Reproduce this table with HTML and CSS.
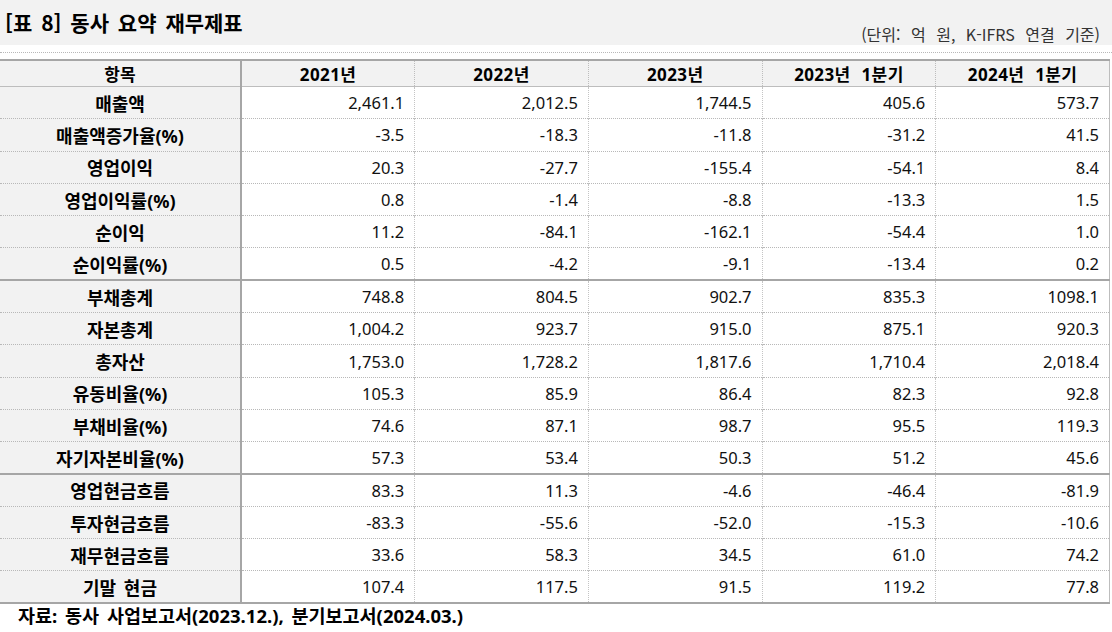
FILE: index.html
```html
<!DOCTYPE html>
<html lang="ko">
<head>
<meta charset="utf-8">
<title>동사 요약 재무제표</title>
<link rel="stylesheet" href="styles.css">
</head>
<body>
<div class="page">
  <div class="title-bar">
    <h1 class="title">[표 8] 동사 요약 재무제표</h1>
    <span class="unit">(단위: 억 원, K-IFRS 연결 기준)</span>
  </div>
  <div class="rule"></div>
  <table class="fin">
    <colgroup>
      <col class="c-label">
      <col><col><col><col><col>
    </colgroup>
    <thead>
      <tr>
        <th class="lbl">항목</th>
        <th>2021년</th>
        <th>2022년</th>
        <th>2023년</th>
        <th>2023년 1분기</th>
        <th>2024년 1분기</th>
      </tr>
    </thead>
    <tbody>
      <tr><th class="lbl">매출액</th><td>2,461.1</td><td>2,012.5</td><td>1,744.5</td><td>405.6</td><td>573.7</td></tr>
      <tr><th class="lbl">매출액증가율(%)</th><td>-3.5</td><td>-18.3</td><td>-11.8</td><td>-31.2</td><td>41.5</td></tr>
      <tr><th class="lbl">영업이익</th><td>20.3</td><td>-27.7</td><td>-155.4</td><td>-54.1</td><td>8.4</td></tr>
      <tr><th class="lbl">영업이익률(%)</th><td>0.8</td><td>-1.4</td><td>-8.8</td><td>-13.3</td><td>1.5</td></tr>
      <tr><th class="lbl">순이익</th><td>11.2</td><td>-84.1</td><td>-162.1</td><td>-54.4</td><td>1.0</td></tr>
      <tr class="group-end"><th class="lbl">순이익률(%)</th><td>0.5</td><td>-4.2</td><td>-9.1</td><td>-13.4</td><td>0.2</td></tr>
      <tr><th class="lbl">부채총계</th><td>748.8</td><td>804.5</td><td>902.7</td><td>835.3</td><td>1098.1</td></tr>
      <tr><th class="lbl">자본총계</th><td>1,004.2</td><td>923.7</td><td>915.0</td><td>875.1</td><td>920.3</td></tr>
      <tr><th class="lbl">총자산</th><td>1,753.0</td><td>1,728.2</td><td>1,817.6</td><td>1,710.4</td><td>2,018.4</td></tr>
      <tr><th class="lbl">유동비율(%)</th><td>105.3</td><td>85.9</td><td>86.4</td><td>82.3</td><td>92.8</td></tr>
      <tr><th class="lbl">부채비율(%)</th><td>74.6</td><td>87.1</td><td>98.7</td><td>95.5</td><td>119.3</td></tr>
      <tr class="group-end"><th class="lbl">자기자본비율(%)</th><td>57.3</td><td>53.4</td><td>50.3</td><td>51.2</td><td>45.6</td></tr>
      <tr><th class="lbl">영업현금흐름</th><td>83.3</td><td>11.3</td><td>-4.6</td><td>-46.4</td><td>-81.9</td></tr>
      <tr><th class="lbl">투자현금흐름</th><td>-83.3</td><td>-55.6</td><td>-52.0</td><td>-15.3</td><td>-10.6</td></tr>
      <tr><th class="lbl">재무현금흐름</th><td>33.6</td><td>58.3</td><td>34.5</td><td>61.0</td><td>74.2</td></tr>
      <tr class="last"><th class="lbl">기말 현금</th><td>107.4</td><td>117.5</td><td>91.5</td><td>119.2</td><td>77.8</td></tr>
    </tbody>
  </table>
  <p class="source">자료: 동사 사업보고서(2023.12.), 분기보고서(2024.03.)</p>
</div>
</body>
</html>
```
FILE: styles.css
```css
* { box-sizing: border-box; }
html, body {
  margin: 0;
  padding: 0;
  background: #ffffff;
}
body {
  font-family: "Noto Sans", "Noto Sans CJK KR", sans-serif;
  color: #000;
}
.page {
  width: 1112px;
}
.title-bar {
  height: 45px;
  background: #f2f2f2;
  display: flex;
  justify-content: space-between;
  align-items: flex-end;
  padding: 0 12px 0 5px;
}
.title {
  margin: 0;
  font-family: "Noto Sans CJK KR", sans-serif;
  font-size: 21px;
  font-weight: 700;
  line-height: 30px;
  word-spacing: 3px;
  align-self: center;
  margin-bottom: 2px;
}
.unit {
  font-family: "Noto Sans CJK KR", sans-serif;
  font-size: 16px;
  color: #333;
  line-height: 20px;
  word-spacing: 6px;
  padding-bottom: 1px;
}
.rule {
  height: 8px;
  border-bottom: 1px dotted #b8b8b8;
  margin-bottom: 6px;
}
.fin {
  width: 1110px;
  border-collapse: collapse;
  table-layout: fixed;
  border-top: 2px solid #a6a6a6;
  border-bottom: 2px solid #a6a6a6;
}
.c-label { width: 241px; }
.fin th, .fin td {
  padding: 0 10px;
  height: 32.3px;
  font-size: 16.5px;
  white-space: nowrap;
}
.fin thead th {
  height: 26px;
  background: #f2f2f2;
  font-family: "Noto Sans", "Noto Sans CJK KR", sans-serif;
  font-size: 17px;
  font-weight: 700;
  letter-spacing: 0.4px;
  word-spacing: 6px;
  text-align: center;
  border-bottom: 1px solid #bdbdbd;
  border-right: 1px dotted #bdbdbd;
}
.fin .lbl {
  background: #f2f2f2;
  font-weight: 700;
  font-size: 18px;
  letter-spacing: 0;
  word-spacing: 3px;
  text-align: center;
  border-right: 2px solid #a6a6a6;
}
.fin thead th.lbl {
  font-size: 17px;
}
.fin td {
  text-align: right;
  border-right: 1px dotted #c4c4c4;
  color: #111;
}
.fin tbody tr {
  border-bottom: 1px dotted #b8b8b8;
}
.fin tbody tr.group-end {
  border-bottom: 2px solid #a6a6a6;
}
.fin tbody tr.last {
  border-bottom: 2px solid #a6a6a6;
}
.fin td:last-child, .fin thead th:last-child {
  border-right: 1px solid #bdbdbd;
}
.source {
  margin: 0;
  padding: 0 0 0 18px;
  font-size: 18.5px;
  font-weight: 700;
  line-height: 24px;
  word-spacing: 3px;
}
```
